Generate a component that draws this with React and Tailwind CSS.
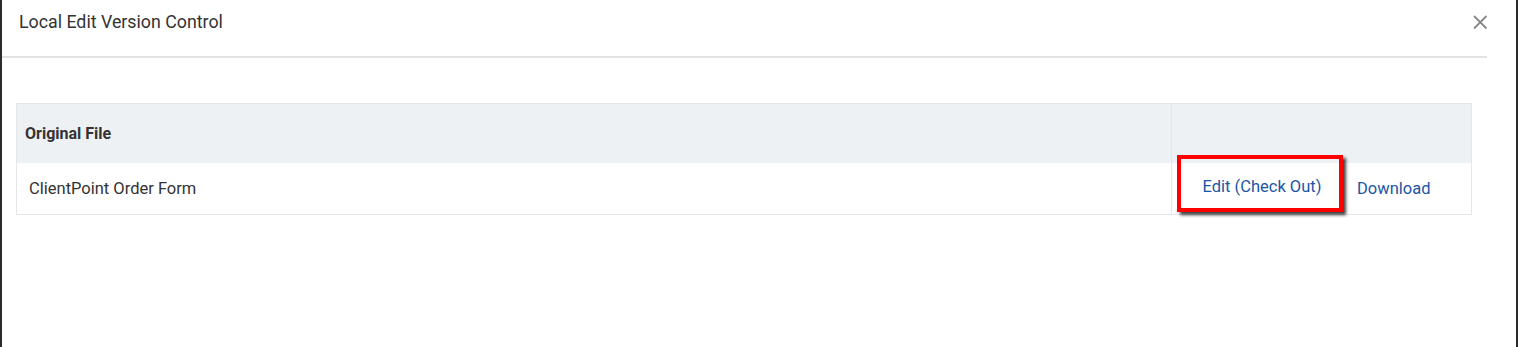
export default function App() {
  return (
    <div className="w-[1518px] h-[347px] bg-white flex font-['Roboto',sans-serif] text-[#333]">
      <div className="w-[2px] bg-[#2b2b2b]" />
      <div className="flex-1 flex flex-col">
        <div className="w-[1485px] h-[58px] border-b-2 border-[#e2e2e2] flex items-start justify-between">
          <h2 className="pl-[17px] pt-[10px] text-[17.8px] leading-[24px]">Local Edit Version Control</h2>
          <button className="mt-[14px] -mr-[1px] text-[#888]">
            <svg width="16" height="16" viewBox="0 0 16 16" fill="none" stroke="currentColor" strokeWidth="1.8">
              <path d="M2 2 L14.5 14.5 M14.5 2 L2 14.5" />
            </svg>
          </button>
        </div>
        <div className="pl-[14px] pt-[45px]">
          <table className="w-[1456px] border border-[#e4e7ea] border-collapse text-[16.5px]">
            <thead>
              <tr className="bg-[#eef1f4] h-[59px]">
                <th className="text-left font-bold text-[16px] pl-[8px] pt-[2px] border-r border-[#e4e7ea]">Original File</th>
                <th className="w-[300px]" />
              </tr>
            </thead>
            <tbody>
              <tr className="h-[52px]">
                <td className="pl-[12px] pt-[2px] border-r border-[#e4e7ea]">ClientPoint Order Form</td>
                <td className="w-[300px]">
                  <div className="flex items-center">
                    <div className="ml-[5px] w-[166px] h-[57px] -mt-[10px] border-[4px] border-[#ff0000] shadow-[3px_3px_3px_rgba(0,0,0,0.75)] flex items-center justify-center pt-[8px] pl-[4px]">
                      <a href="#" className="text-[#1b56a6]">Edit (Check Out)</a>
                    </div>
                    <a href="#" className="ml-[14px] pt-[2px] text-[#1b56a6]">Download</a>
                  </div>
                </td>
              </tr>
            </tbody>
          </table>
        </div>
      </div>
      <div className="w-[2px] bg-[#2b2b2b]" />
    </div>
  );
}
